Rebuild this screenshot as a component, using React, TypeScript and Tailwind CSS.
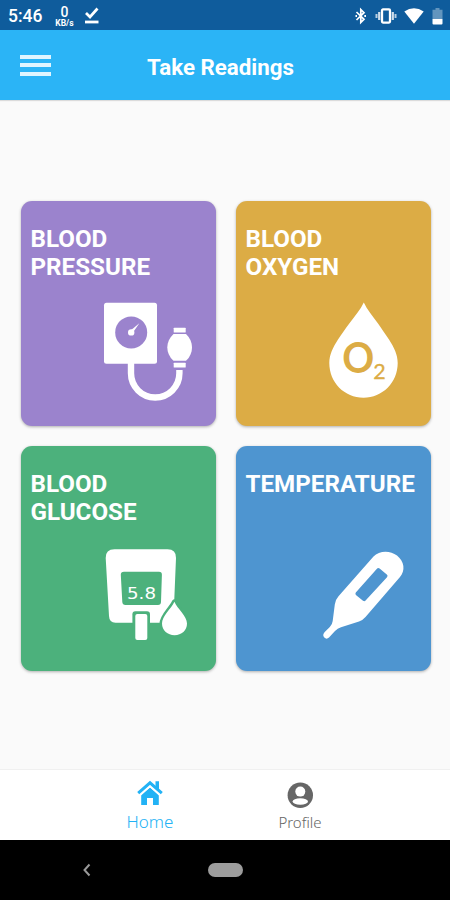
import React, { useState } from "react";

interface Reading {
  id: string;
  title: string;
  color: string;
  art: React.ReactNode;
}

const PressureArt = () => (
  <svg className="w-[110px] h-[110px]" viewBox="100 296 110 110" fill="#fff">
    <rect x="104" y="302.8" width="53" height="61" rx="2.5" />
    <circle cx="131.2" cy="332.4" r="16" fill="#9b83cd" />
    <circle cx="131.2" cy="332.4" r="3.2" />
    <path d="M130.3 330.8L139.3 323.3L132.6 333Z" />
    <path d="M131 362V373.3A24.2 24.2 0 0 0 179.4 373.3V370" fill="none" stroke="#fff" strokeWidth="6.4" />
    <rect x="173.7" y="327.7" width="12" height="4.8" rx="0.6" />
    <path d="M173.5 334H186C190 338 192 342.5 192 347.4S190 357 186 360.8H173.5C169.5 357 167.3 352.3 167.3 347.4S169.5 338 173.5 334Z" />
    <rect x="173.7" y="362.7" width="12" height="4.8" rx="0.6" />
  </svg>
);

const OxygenArt = () => (
  <svg className="w-[110px] h-[110px]" viewBox="315 296 110 110" fill="#fff">
    <path d="M363.8 302.5C367 309.5 372.5 316 378 323.5C381.5 328.5 385 333.5 389 339.5C394 347.5 397.7 354.5 397.7 363C397.7 382.5 382.5 397.7 363.5 397.7S329.3 382.5 329.3 363C329.3 354.5 333 347.5 338 339.5C342 333.5 345.5 328.5 349.3 323.5C355 316 360.5 309.5 363.8 302.5Z" />
    <text x="342.3" y="372.7" fontSize="41.5" textLength="32" lengthAdjust="spacingAndGlyphs" className="font-[Lato,sans-serif] font-bold fill-[#dcac45]">O</text>
    <text x="373.3" y="379.3" fontSize="21.5" strokeWidth="0.3" className="font-[Lato,sans-serif] fill-[#dcac45] stroke-[#dcac45]">2</text>
  </svg>
);

const GlucoseArt = () => (
  <svg className="w-[110px] h-[110px]" viewBox="100 541 110 110" fill="#fff">
    <path d="M114.5 549.3H167.5Q176.2 549.3 176 558L173.6 616Q173.2 622.7 166.5 622.7H115.5Q109.3 622.7 109 616L105.7 558Q105.5 549.3 114.5 549.3Z" />
    <path d="M124 571.8H159Q162 571.8 161.9 574.8L161 602Q160.9 605 158 605H125.5Q122.5 605 122.3 602L120.8 574.8Q120.7 571.8 124 571.8Z" fill="#4cb17c" />
    <text x="127" y="598.7" fontSize="16.5" textLength="29" lengthAdjust="spacingAndGlyphs" className="font-['DejaVu_Sans',sans-serif]">5.8</text>
    <rect x="132.4" y="611.3" width="17.6" height="28" rx="3" fill="#4cb17c" />
    <rect x="135.3" y="614" width="12" height="26" rx="2" />
    <path d="M174.4 601.8C177.5 609 187 616 187 623.5C187 630.3 181.5 635.2 174.6 635.2S162 630.3 162 623.5C162 616 171 609 174.4 601.8Z" stroke="#4cb17c" strokeWidth="5" strokeLinejoin="round" />
    <path d="M174.4 601.8C177.5 609 187 616 187 623.5C187 630.3 181.5 635.2 174.6 635.2S162 630.3 162 623.5C162 616 171 609 174.4 601.8Z" />
  </svg>
);

const TemperatureArt = () => (
  <svg className="w-[110px] h-[110px]" viewBox="315 541 110 110" fill="#fff">
    <path
      fillRule="evenodd"
      d="M373.5 556.5C379 550.5 390 550 397 555.5C404.5 561.5 405.5 570.5 400 577L365.5 617Q363 620 359 621.5L341 627.3Q337.5 628.3 335 631L329 637.5Q326.5 639.8 324.3 637.5T324.5 632.3L329.8 627Q332.3 624.5 332.7 621L334.8 604.5Q335.3 599.7 338.5 596.2Z
         M376.7 569L355.8 592.5Q354.7 594 356.2 595.2L363 600.7Q364.5 601.8 365.8 600.3L387 577.3Q388.3 575.8 386.8 574.5L379.6 568.5Q378 567.5 376.7 569Z"
    />
  </svg>
);

const readings: Reading[] = [
  { id: "pressure", title: "BLOOD PRESSURE", color: "bg-[#9b83cd]", art: <PressureArt /> },
  { id: "oxygen", title: "BLOOD OXYGEN", color: "bg-[#dcac45]", art: <OxygenArt /> },
  { id: "glucose", title: "BLOOD GLUCOSE", color: "bg-[#4cb17c]", art: <GlucoseArt /> },
  { id: "temperature", title: "TEMPERATURE", color: "bg-[#4e95d0]", art: <TemperatureArt /> },
];

const StatusBar = () => (
  <div className="h-[30px] shrink-0 bg-[#0f5c9c] text-white flex items-center justify-between pl-2 pr-[7px]">
    <div className="flex items-center">
      <span className="text-[17.5px] leading-5 font-medium pt-0.5">5:46</span>
      <div className="ml-3 flex flex-col items-center w-5 pt-0.5">
        <span className="text-[14px] leading-[13px] font-medium">0</span>
        <span className="text-[8.5px] leading-[8px] font-bold">KB/s</span>
      </div>
      <svg className="ml-2.5 w-4 h-[18px]" viewBox="0 0 16 18" fill="none" stroke="#fff">
        <path d="M2 7L6 11L13.5 2.5" strokeWidth="2.7" />
        <path d="M1 16H14.5" strokeWidth="2.8" />
      </svg>
    </div>
    <div className="flex items-center">
      <svg className="w-3 h-[18px] mt-px" viewBox="0 0 12 18" fill="none" stroke="#fff" strokeWidth="1.7">
        <path d="M1.5 5L9 12.3L5.8 15.4V2.6L9 5.7L1.5 13" />
        <path d="M0.5 9H2M9.3 9H11" strokeWidth="1.8" />
      </svg>
      <svg className="ml-2 w-[22px] h-[18px] mt-px" viewBox="0 0 22 18" fill="none" stroke="#fff">
        <rect x="7" y="2.4" width="8" height="13.2" rx="1" strokeWidth="2.3" />
        <path d="M4.2 5V13M17.8 5V13" strokeWidth="2.2" strokeOpacity="0.8" />
        <path d="M1.5 7V11M20.5 7V11" strokeWidth="2" strokeOpacity="0.7" />
      </svg>
      <svg className="ml-[7px] w-5 h-[18px] mt-px" viewBox="0 0 20 18" fill="#fff">
        <path d="M0.3 4.5Q10 -2 19.7 4.5L10 16.8Z" />
      </svg>
      <svg className="ml-2 w-[11px] h-[18px] mt-px" viewBox="0 0 11 18" fill="#fff">
        <path d="M3.5 1H7.5V2.8H10.5V12H0.5V2.8H3.5Z" fillOpacity="0.35" />
        <path d="M0.5 12H10.5V16.5Q10.5 17.5 9.5 17.5H1.5Q0.5 17.5 0.5 16.5Z" />
      </svg>
    </div>
  </div>
);

const App = () => {
  const [tab, setTab] = useState("home");

  return (
    <div className="w-full h-[900px] flex flex-col bg-[#fafafa] overflow-hidden font-[Roboto,sans-serif]">
      <StatusBar />

      <header className="h-[70px] shrink-0 bg-[#2bb4f6] pl-5 pr-[29px] grid grid-cols-[32px_1fr_32px] items-center shadow-[0_1px_1px_rgba(0,0,0,0.12)]">
        <button className="flex flex-col gap-[4.5px]">
          <span className="w-[31px] h-1 bg-[#dff5ff]" />
          <span className="w-[31px] h-1 bg-[#dff5ff]" />
          <span className="w-[31px] h-1 bg-[#dff5ff]" />
        </button>
        <h1 className="text-center text-white font-bold text-[22.3px] leading-7 pt-1 whitespace-nowrap">Take Readings</h1>
      </header>

      <main className="flex-1 grid grid-cols-2 gap-5 content-center pt-0.5 pl-[20.5px] pr-[19.5px]">
        {readings.map((reading) => (
          <button
            key={reading.id}
            className={`h-[225px] rounded-[11px] flex flex-col text-left shadow-[0_1px_3px_rgba(0,0,0,0.3)] ${reading.color}`}
          >
            <h2 className="px-2.5 pt-6 text-white font-bold text-[24.2px] leading-7">{reading.title}</h2>
            <div className="mt-auto self-end mr-[5.5px] mb-[19.5px]">{reading.art}</div>
          </button>
        ))}
      </main>

      <nav className="h-[71px] shrink-0 bg-white border-t border-[#f0f0f0] grid grid-cols-2 px-[75px] font-['Noto_Sans',sans-serif] font-light">
        <button
          className={`flex flex-col items-center pt-2.5 ${tab === "home" ? "text-[#22b2f5]" : "text-[#666]"}`}
          onClick={() => setTab("home")}
        >
          <svg className="w-[26px] h-[26px]" viewBox="0 0 26 26" fill="currentColor">
            <path d="M13 7.5L21.8 15V25H16V18H10V25H4.2V15Z" />
            <path d="M1.2 13.2L13 2.8L24.8 13.2" fill="none" stroke="currentColor" strokeWidth="3" />
            <path d="M18.5 1.2H22V10L18.5 7Z" />
            <path d="M2.8 15.8L13 6.6L23.2 15.8" fill="none" stroke="#fff" strokeWidth="1.1" />
          </svg>
          <span className="text-[17px] leading-6 mt-1">Home</span>
        </button>
        <button
          className={`flex flex-col items-center pt-3 ${tab === "profile" ? "text-[#22b2f5]" : "text-[#666]"}`}
          onClick={() => setTab("profile")}
        >
          <svg className="w-[26px] h-[26px]" viewBox="0 0 26 26" fill="currentColor">
            <circle cx="13.3" cy="13.2" r="12.7" />
            <circle cx="13.3" cy="9.6" r="5" fill="#fff" />
            <ellipse cx="13.3" cy="19.5" rx="7.7" ry="3.2" fill="#fff" />
          </svg>
          <span className="text-[15px] leading-6 mt-0.5">Profile</span>
        </button>
      </nav>

      <div className="h-[60px] shrink-0 bg-black grid grid-cols-3 items-center justify-items-center">
        <svg className="w-3 h-4 ml-6" viewBox="0 0 12 16" fill="none" stroke="#999" strokeWidth="2">
          <path d="M8.5 2.5L3.5 8L8.5 13.5" />
        </svg>
        <span className="w-[35px] h-3.5 rounded-full bg-[#9c9c9c]" />
      </div>
    </div>
  );
};

export default App;
